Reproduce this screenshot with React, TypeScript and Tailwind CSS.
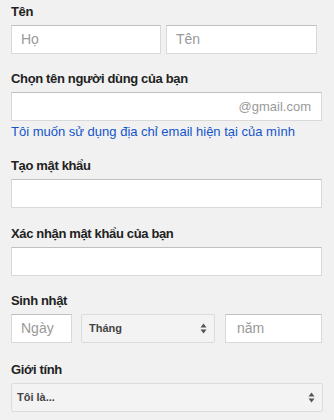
import React from 'react'

function Label({ children }: { children: React.ReactNode }) {
  return <div className="mb-[6px] text-[13px] font-bold leading-[15px] tracking-[-0.35px] text-[#222]">{children}</div>
}

function TextBox({ placeholder, suffix, className = '' }: { placeholder?: string; suffix?: string; className?: string }) {
  return (
    <div className={`flex h-[29px] items-center border border-[#d9d9d9] border-t-[#c0c0c0] bg-white pl-[9px] pr-[10px] ${className}`}>
      <span className="flex-1 text-[14px] text-[#999]">{placeholder}</span>
      {suffix && <span className="text-[13px] text-[#999]">{suffix}</span>}
    </div>
  )
}

function Arrows() {
  return (
    <svg width="7" height="11" viewBox="0 0 7 11" className="shrink-0">
      <path d="M3.5 0.5 L6.5 4.5 H0.5 Z" fill="#555" />
      <path d="M0.5 6.5 H6.5 L3.5 10.5 Z" fill="#555" />
    </svg>
  )
}

function SelectBox({ text, className = '' }: { text: string; className?: string }) {
  return (
    <div className={`flex h-[29px] items-center rounded-[2px] border border-[#dcdcdc] bg-[#f3f3f3] pr-[7px] ${className}`}>
      <span className="flex-1 text-[11px] font-bold text-[#444]">{text}</span>
      <Arrows />
    </div>
  )
}

export default function App() {
  return (
    <div className="h-[420px] w-[334px] bg-[#f1f1f1] px-[11px] pt-[4px]" style={{ fontFamily: '"Liberation Sans", Arial, sans-serif' }}>
      <div className="w-[311px]">
        <Label>Tên</Label>
        <div className="flex gap-[5px]">
          <TextBox placeholder="Họ" className="w-[150px]" />
          <TextBox placeholder="Tên" className="w-[151px]" />
        </div>

        <div className="mt-[17px]">
          <Label>Chọn tên người dùng của bạn</Label>
          <TextBox suffix="@gmail.com" className="w-[311px]" />
          <div className="mt-[3px] text-[13px] leading-[15px] text-[#15c]">Tôi muốn sử dụng địa chỉ email hiện tại của mình</div>
        </div>

        <div className="mt-[19px]">
          <Label>Tạo mật khẩu</Label>
          <TextBox className="w-[311px]" />
        </div>

        <div className="mt-[18px]">
          <Label>Xác nhận mật khẩu của bạn</Label>
          <TextBox className="w-[311px]" />
        </div>

        <div className="mt-[17px]">
          <Label>Sinh nhật</Label>
          <div className="flex">
            <TextBox placeholder="Ngày" className="w-[61px]" />
            <SelectBox text="Tháng" className="ml-[9px] w-[134px] pl-[7px]" />
            <TextBox placeholder="năm" className="ml-[10px] w-[97px] !pl-[11px]" />
          </div>
        </div>

        <div className="mt-[19px]">
          <Label>Giới tính</Label>
          <SelectBox text="Tôi là..." className="w-[312px] pl-[5px]" />
        </div>
      </div>
    </div>
  )
}
